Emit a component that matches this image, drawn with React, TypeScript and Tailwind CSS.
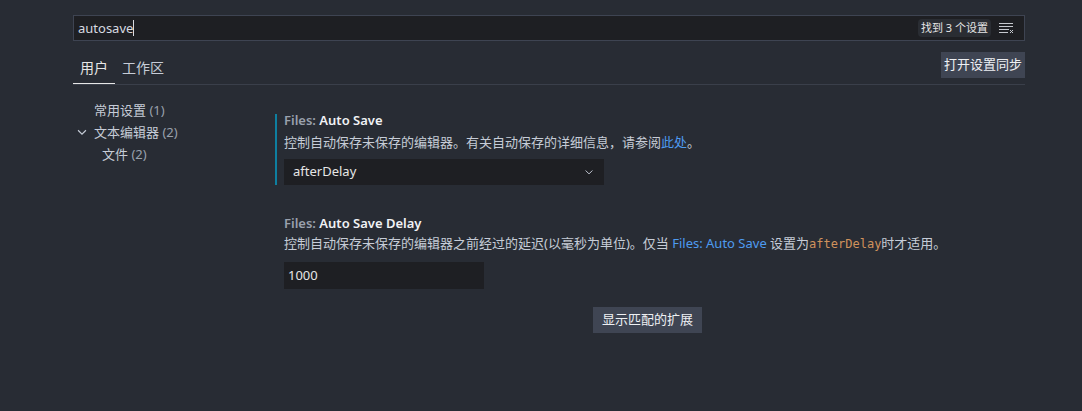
import React from "react";

const font = "font-['Noto_Sans','Noto_Sans_CJK_SC',sans-serif]";

const Chevron = ({ className, size = 12 }: { className?: string; size?: number }) => (
  <svg width={size} height={size} viewBox="0 0 16 16" className={className} fill="none">
    <path d="M3.5 6l4.5 4.5L12.5 6" stroke="currentColor" strokeWidth="1.3" />
  </svg>
);

const FilterIcon = () => (
  <svg width="16" height="12" viewBox="0 0 16 12" fill="none">
    <path d="M1 1.5h14M1 4.5h14M1 7.5h10M1 10.5h9" stroke="#c5c8ce" strokeWidth="1" />
    <path d="M12 8l3 3M15 8l-3 3" stroke="#c5c8ce" strokeWidth="1" />
  </svg>
);

export default function App() {
  return (
    <div className={`w-[1082px] h-[411px] bg-[#282c34] ${font} text-[13px] text-[#c6ccd7] overflow-hidden`}>
      <div className="ml-[73px] w-[952px] pt-[15px]">
        {/* search */}
        <div className="h-[26px] flex items-center border border-[#3e4452] bg-[#1e1f23] pl-[4px] pr-[10px]">
          <span className="text-[#d7dae0] leading-none">autosave</span>
          <span className="w-px h-[16px] bg-[#d7dae0]" />
          <div className="flex-1" />
          <span className="bg-[#2a2d33] text-[#e6e6e6] text-[11px] px-[3px] py-[1px] rounded-sm mr-[7px]">找到 3 个设置</span>
          <FilterIcon />
        </div>

        {/* tabs */}
        <div className="flex items-end justify-between border-b border-[#3a3f4a] mt-[10px]">
          <div className="flex">
            <div className="w-[42px] h-[33px] flex items-center justify-center border-b-[1.5px] border-[#e6e6e6] text-[#e6e6e6] text-[14px] -mb-px">用户</div>
            <div className="h-[33px] flex items-center pl-[7px] text-[#c6ccd7] text-[14px]">工作区</div>
          </div>
          <div className="h-[26px] px-[3px] mb-[6px] bg-[#3f4553] text-[#eef0f3] text-[13px] flex items-center">打开设置同步</div>
        </div>

        {/* body */}
        <div className="flex mt-[15px]">
          <div className="w-[202px] -mt-[1px] text-[#c6ccd7] leading-[22px]">
            <div className="pl-[21px]">常用设置 <span className="text-[#9aa1ad]">(1)</span></div>
            <div className="flex items-center gap-[5px] pl-[2px]">
              <Chevron className="text-[#c6ccd7]" size={14} />
              <span>文本编辑器 <span className="text-[#9aa1ad]">(2)</span></span>
            </div>
            <div className="pl-[29px]">文件 <span className="text-[#9aa1ad]">(2)</span></div>
          </div>

          <div className="flex-1">
            <div className="border-l-2 border-[#0e7fa0] pl-[7px] mt-[14px]">
              <div className="leading-[12px]">
                <span className="text-[#9aa1ad] font-semibold">Files: </span>
                <span className="text-[#f0f2f5] font-semibold">Auto Save</span>
              </div>
              <div className="mt-[7px] leading-[18px]">
                控制自动保存未保存的编辑器。有关自动保存的详细信息，请参阅<span className="text-[#4e9bf0]">此处</span>。
              </div>
              <div className="mt-[8px] w-[320px] h-[26px] bg-[#1e1f23] flex items-center justify-between pl-[9px] pr-[9px] text-[#e6e6e6]">
                <span>afterDelay</span>
                <Chevron className="text-[#c6ccd7]" />
              </div>
            </div>

            <div className="pl-[9px] mt-[29px]">
              <div className="leading-[18px]">
                <span className="text-[#9aa1ad] font-semibold">Files: </span>
                <span className="text-[#f0f2f5] font-semibold">Auto Save Delay</span>
              </div>
              <div className="mt-[2px] leading-[18px]">
                控制自动保存未保存的编辑器之前经过的延迟(以毫秒为单位)。仅当 <span className="text-[#4e9bf0]">Files: Auto Save</span> 设置为<span className="text-[#d0925c] font-['DejaVu_Sans_Mono',monospace] text-[12px]">afterDelay</span>时才适用。
              </div>
              <div className="mt-[9px] w-[200px] h-[27px] bg-[#1e1f23] flex items-center pl-[4px] text-[#e6e6e6]">1000</div>
            </div>

            <div className="flex justify-center mt-[18px] pr-[5px]">
              <div className="h-[26px] px-[9px] bg-[#3f4553] text-[#eef0f3] flex items-center">显示匹配的扩展</div>
            </div>
          </div>
        </div>
      </div>
    </div>
  );
}
